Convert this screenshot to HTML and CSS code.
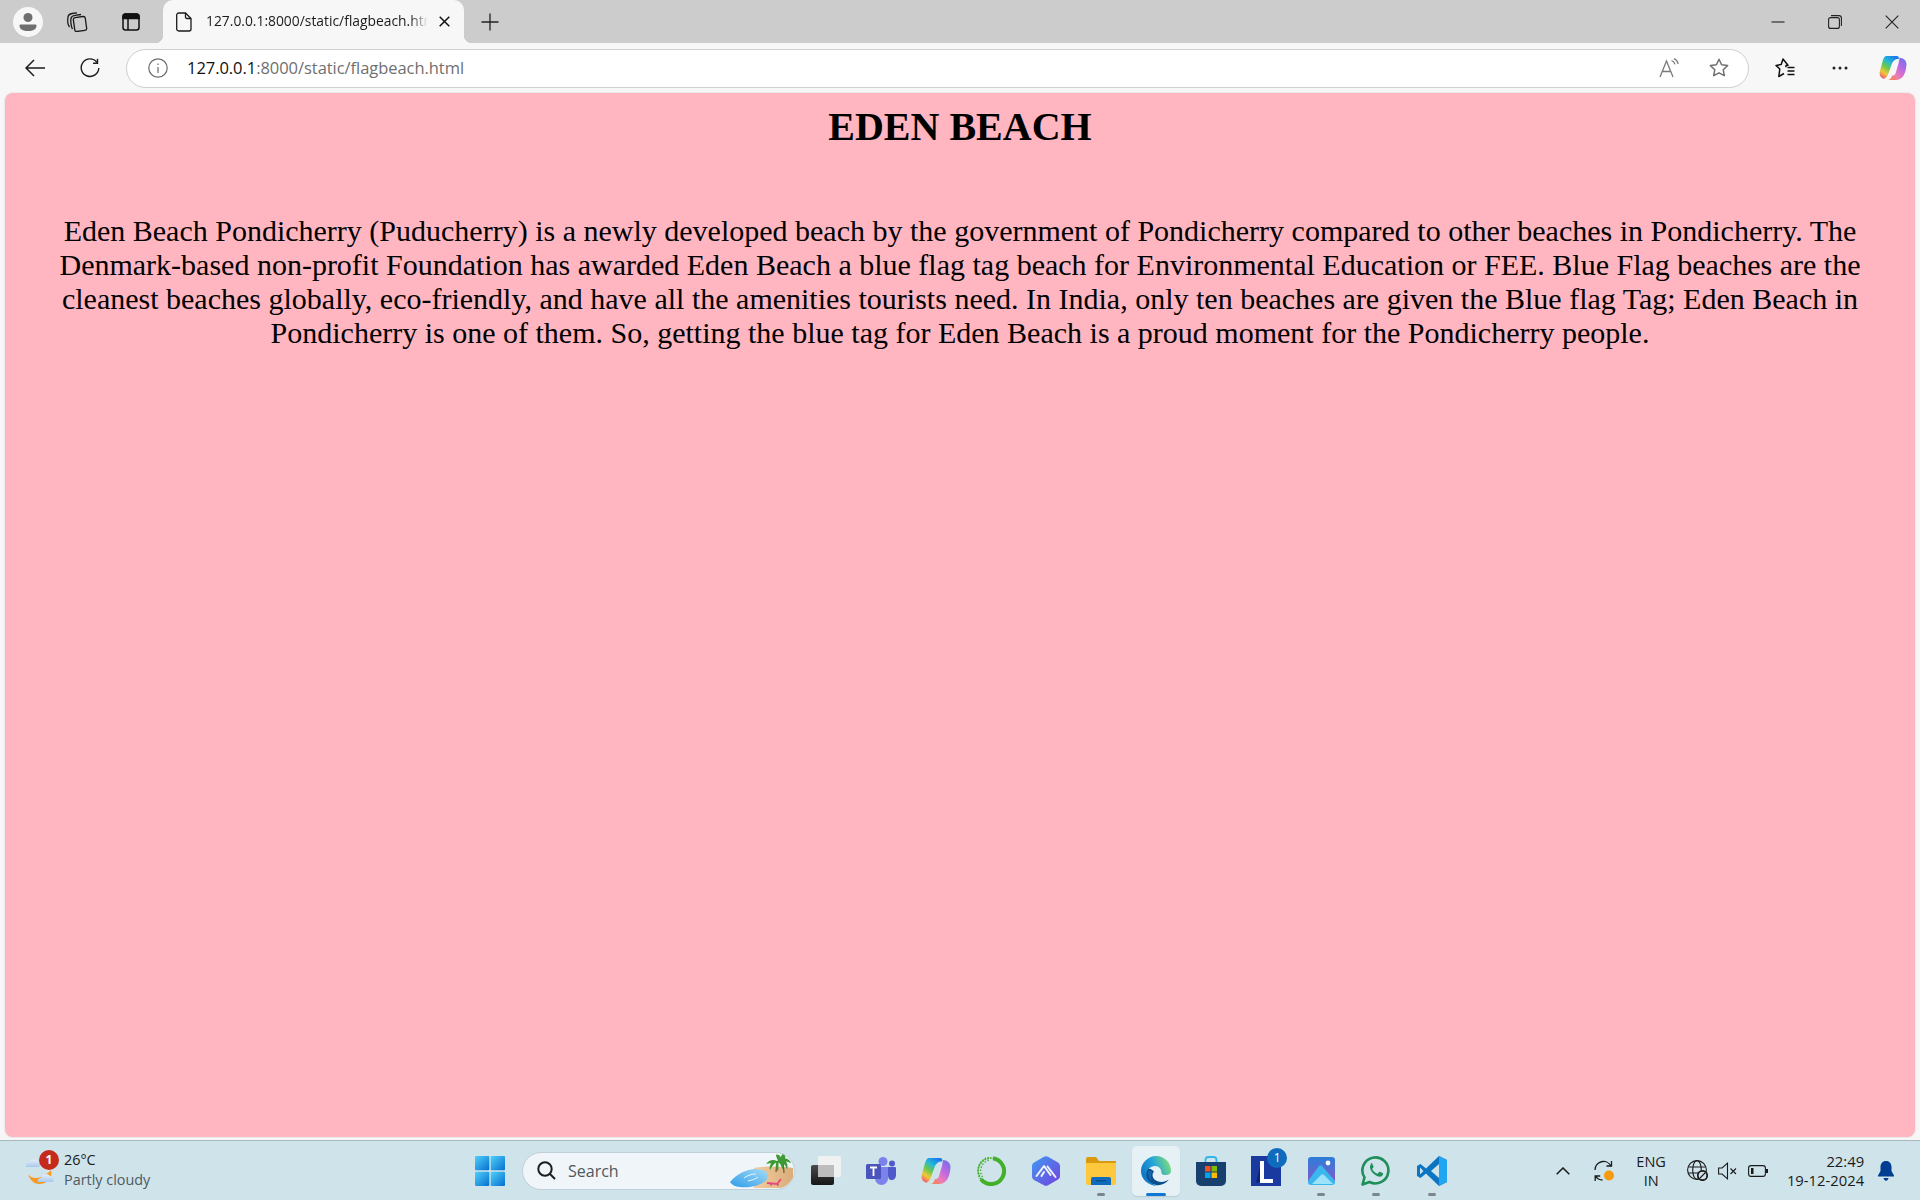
FILE: index.html
```html
<!DOCTYPE html>
<html lang="en">
<head>
<meta charset="utf-8">
<title>Eden Beach</title>
<link rel="stylesheet" href="styles.css">
</head>
<body>
<svg class="defs" width="0" height="0" aria-hidden="true">
  <defs>
    <linearGradient id="cp" x1=".75" y1="0" x2=".2" y2="1">
      <stop offset="0" stop-color="#1a78ee"/><stop offset=".3" stop-color="#22b8d8"/><stop offset=".55" stop-color="#6cc94a"/><stop offset=".78" stop-color="#f2c83a"/><stop offset="1" stop-color="#ee5f6a"/>
    </linearGradient>
    <linearGradient id="cp2" x1=".9" y1="0" x2=".1" y2="1">
      <stop offset="0" stop-color="#6f70ea"/><stop offset=".4" stop-color="#c168e0"/><stop offset=".7" stop-color="#ee7db8"/><stop offset="1" stop-color="#f5853a"/>
    </linearGradient>
    <symbol id="copilot" viewBox="0 0 30 28">
      <path d="M8 1h11c2 0 3 2 2 3.500-3-.5-5.500 1.500-7 4.500l-4 11c-1 3-3 6-5.500 5.500C1 24 0 21 1 17L4 6c1-3 2-5 4-5z" fill="url(#cp)"/>
      <path d="M22 3c4 0 8 3 7.500 8-.5 4-1.500 10-4.500 13-2 2-4 3-7 3H9c3 0 4-2 5-5 1.500 0 3 0 4-3l3-10c.5-2 .5-4 1-6z" fill="url(#cp2)"/>
    </symbol>
    <linearGradient id="win" x1="0" y1="0" x2="1" y2="1">
      <stop offset="0" stop-color="#4fd0fb"/><stop offset="1" stop-color="#0570cf"/>
    </linearGradient>
    <linearGradient id="edge" x1="0" y1=".7" x2="1" y2=".3">
      <stop offset="0" stop-color="#0d6fc4"/><stop offset=".5" stop-color="#22a5dc"/><stop offset="1" stop-color="#7edc78"/>
    </linearGradient>
    <linearGradient id="hex" x1="0" y1="0" x2="1" y2="1">
      <stop offset="0" stop-color="#3f9bf0"/><stop offset="1" stop-color="#7440e0"/>
    </linearGradient>
    <linearGradient id="photo" x1="0" y1="0" x2="0" y2="1">
      <stop offset="0" stop-color="#2a7fd8"/><stop offset="1" stop-color="#8a56c8"/>
    </linearGradient>
    <linearGradient id="pool" x1="0" y1="1" x2="1" y2="0">
      <stop offset="0" stop-color="#2f9ce8"/><stop offset="1" stop-color="#a6dcf6"/>
    </linearGradient>
    <linearGradient id="sand" x1="0" y1="0" x2="1" y2="0">
      <stop offset="0" stop-color="#f3cc9e"/><stop offset="1" stop-color="#d9ad7a"/>
    </linearGradient>
    <linearGradient id="tv" x1="0" y1="0" x2="0" y2="1">
      <stop offset="0" stop-color="#4a4a4a"/><stop offset="1" stop-color="#161616"/>
    </linearGradient>
    <linearGradient id="cloud" x1="0" y1="0" x2="0" y2="1">
      <stop offset="0" stop-color="#e4effb"/><stop offset="1" stop-color="#a9c8ee"/>
    </linearGradient>
  </defs>
</svg>

<div class="tabstrip">
  <div class="cell cell-profile">
    <span class="avatar">
      <svg width="30" height="30" viewBox="0 0 30 30"><circle cx="15" cy="15" r="15" fill="#f7f7f7"/><circle cx="15" cy="10.500" r="4.500" fill="#6e6e6e"/><path d="M7.500 17.500h15a1 1 0 0 1 1 1v.5c0 3-3.500 5-8.500 5s-8.500-2-8.500-5v-.5a1 1 0 0 1 1-1z" fill="#6e6e6e"/></svg>
    </span>
  </div>
  <div class="cell cell-coll">
    <svg width="22" height="20" viewBox="0 0 22 20" fill="none" stroke="#1a1a1a" stroke-width="1.300"><rect x="8" y="5" width="12" height="14" rx="2" transform="rotate(-8 14 12)"/><path d="M6.500 17C5 15 4.500 9 5 6.500 5.300 4.500 7 3.500 9 3.300l6-.8"/><path d="M3.500 15C2 13 1.500 8 2 5 2.300 3 4 1.800 6 1.500l5-.7"/></svg>
  </div>
  <div class="cell cell-tabs">
    <svg width="18" height="18" viewBox="0 0 18 18" fill="none" stroke="#111" stroke-width="1.500"><rect x="1" y="1" width="16" height="16" rx="2.500"/><path d="M1 3.500a2.500 2.500 0 0 1 2.500-2.500h11a2.500 2.500 0 0 1 2.500 2.500V5.500H1z" fill="#111"/><path d="M6 5.500V17"/></svg>
  </div>
  <div class="tab">
    <svg class="tab-fav" width="16" height="20" viewBox="0 0 16 20" fill="none" stroke="#1a1a1a" stroke-width="1.300"><path d="M2.700 1h6.800L15 6.500V17a2 2 0 0 1-2 2H2.700a2 2 0 0 1-2-2V3a2 2 0 0 1 2-2z"/><path d="M9.500 1v4a1.500 1.500 0 0 0 1.500 1.500h4"/></svg>
    <span class="tab-title">127.0.0.1:8000/static/flagbeach.html</span>
    <svg class="tab-close" width="11" height="11" viewBox="0 0 11 11" stroke="#111" stroke-width="1.500"><path d="M.7.7l9.600 9.600M10.300.7L.7 10.300"/></svg>
  </div>
  <div class="cell cell-plus">
    <svg width="18" height="18" viewBox="0 0 18 18" stroke="#222" stroke-width="1.300"><path d="M9 .5v17M.5 9h17"/></svg>
  </div>
  <div class="spacer"></div>
  <div class="cell cell-win">
    <svg width="14" height="14" viewBox="0 0 14 14" stroke="#222" stroke-width="1.100"><path d="M.5 7h13"/></svg>
  </div>
  <div class="cell cell-win">
    <svg width="14" height="14" viewBox="0 0 14 14" fill="none" stroke="#222" stroke-width="1.100"><rect x=".6" y="2.600" width="10.800" height="10.800" rx="2"/><path d="M3 .6h8a2.400 2.400 0 0 1 2.400 2.400v8"/></svg>
  </div>
  <div class="cell cell-win">
    <svg width="14" height="14" viewBox="0 0 14 14" stroke="#222" stroke-width="1.100"><path d="M.7.7l12.600 12.600M13.300.7L.7 13.300"/></svg>
  </div>
</div>

<div class="toolbar">
  <div class="cell cell-back">
    <svg width="20" height="18" viewBox="0 0 20 18" fill="none" stroke="#1c1c1c" stroke-width="1.500"><path d="M20 9H1M9 1L1 9l8 8"/></svg>
  </div>
  <div class="cell cell-reload">
    <svg width="20" height="20" viewBox="0 0 20 20" fill="none" stroke="#1c1c1c" stroke-width="1.400"><path d="M16.900 4.200A8.800 8.800 0 1 0 18.800 10"/><path d="M17.500.8v4.400h-4.400"/></svg>
  </div>
  <div class="address">
    <svg class="addr-info" width="20" height="20" viewBox="0 0 20 20" fill="none" stroke="#6c6c6c" stroke-width="1.200"><circle cx="10" cy="10" r="9.200"/><path d="M10 9v6M10 5.500v1.500"/></svg>
    <span class="url"><span class="url-host">127.0.0.1</span>:8000/static/flagbeach.html</span>
    <svg class="addr-read" width="20" height="20" viewBox="0 0 20 20" fill="none" stroke="#7a7a7a" stroke-width="1.300"><path d="M1 19L7.500 3 14 19M3.500 13.500h8"/><path d="M12.500 2.500c1.800.6 3 2 3.500 3.800M15 .6c2.200.9 3.700 2.900 4.200 5.200"/></svg>
    <svg class="addr-star" width="20" height="20" viewBox="0 0 20 20" fill="none" stroke="#707070" stroke-width="1.500"><path d="M10 1.300l2.600 5.500 6 .8-4.400 4.100 1.100 6L10 14.800l-5.300 2.900 1.100-6L1.400 7.600l6-.8z" stroke-linejoin="round"/></svg>
  </div>
  <div class="cell cell-fav">
    <svg width="20" height="20" viewBox="0 0 20 20" fill="none" stroke="#111" stroke-width="1.500"><path d="M11 9.200V7.500l2-.3L8 1 6.200 6.500 1 7.400 4.800 11 3.800 18.500 9 15.500" stroke-linejoin="round"/><path d="M12.500 9.500h7M12.500 13h7M12.500 16.500h7"/></svg>
  </div>
  <div class="cell cell-dots">
    <svg width="16" height="4" viewBox="0 0 16 4" fill="#222"><circle cx="2" cy="2" r="1.500"/><circle cx="8" cy="2" r="1.500"/><circle cx="14" cy="2" r="1.500"/></svg>
  </div>
  <div class="cell cell-copilot">
    <svg width="28" height="26"><use href="#copilot"/></svg>
  </div>
</div>

<main class="page">
  <h1 class="title">EDEN BEACH</h1>
  <p class="intro">Eden Beach Pondicherry (Puducherry) is a newly developed beach by the government of Pondicherry compared to other beaches in Pondicherry. The Denmark-based non-profit Foundation has awarded Eden Beach a blue flag tag beach for Environmental Education or FEE. Blue Flag beaches are the cleanest beaches globally, eco-friendly, and have all the amenities tourists need. In India, only ten beaches are given the Blue flag Tag; Eden Beach in Pondicherry is one of them. So, getting the blue tag for Eden Beach is a proud moment for the Pondicherry people.</p>
</main>

<footer class="taskbar">
  <div class="weather">
    <span class="weather-icon">
      <svg width="30" height="30" viewBox="0 0 30 30"><path d="M3 19c3 5 11 5 17 1 3-2 5-4 6-5 2 7-3 14-12 14-5 0-9-4-11-10z" fill="#f59a23"/><path d="M1 12c-1-2 1-4 3-4 1-4 7-5 9-1 2 0 3 3 1 5z" fill="url(#cloud)"/><path d="M13 27c-1-2 1-4 3-4 1-4 7-5 9-2 3 0 5 4 3 6z" fill="url(#cloud)"/></svg>
      <span class="weather-badge">1</span>
    </span>
    <span class="weather-text">
      <span class="temp">26°C</span>
      <span class="cond">Partly cloudy</span>
    </span>
  </div>
  <div class="tb-item tb-start">
    <svg width="30" height="30" viewBox="0 0 30 30" fill="url(#win)"><rect x="0" y="0" width="14.300" height="14.300" rx="1"/><rect x="15.700" y="0" width="14.300" height="14.300" rx="1"/><rect x="0" y="15.700" width="14.300" height="14.300" rx="1"/><rect x="15.700" y="15.700" width="14.300" height="14.300" rx="1"/></svg>
  </div>
  <div class="searchbox">
    <svg class="search-icon" width="19" height="19" viewBox="0 0 19 19" fill="none" stroke="#1d1d1d" stroke-width="2"><circle cx="8" cy="8" r="6.700"/><path d="M13 13l5 5"/></svg>
    <span class="search-label">Search</span>
    <svg class="search-art" width="64" height="38" viewBox="0 0 64 38">
      <path d="M24 16c11-2 26-2 39 0v10c-3 5-7 9-13 10H24z" fill="url(#sand)"/>
      <path d="M0 30c6-8 18-14 28-13 8 1 12 5 9 10-4 6-17 9-27 8-5-.5-8-2-10-5z" fill="url(#pool)"/>
      <path d="M14 26c4-3 8-4 12-4M18 29c4-1 8-2 10-4" stroke="#e3f4fd" stroke-width="1" fill="none"/>
      <path d="M37 31l10 1 4-5" stroke="#e9487f" stroke-width="2" fill="none"/>
      <path d="M41 32v2M48 32v2" stroke="#c9356a" stroke-width="1"/>
      <path d="M46 20l1-11M54 21l-1-12" stroke="#7a5a30" stroke-width="1.300"/>
      <path d="M47 9c-4-2-8-1-11 3 2-.5 4-1 5-.5-1 2-2 4-1 7 1-3 3-6 6-8-.5 3 0 6 2 9 .5-3 .5-6 .5-9 2 1 3 4 4 7 1-2 1-4 .5-6 2 1 3 3 4 6 1-3 .5-6-1-8 2 0 4 1 5 2-.5-3-3-5-6-5 1-2 0-4-2-5-1 1-2 2-2 4-1-2-2-3-5-3 0 2 1 4 2 6z" fill="#3e9a34"/>
    </svg>
  </div>
  <div class="tb-item">
    <svg width="30" height="30" viewBox="0 0 30 30"><rect x="0" y="9" width="23" height="20" rx="2" fill="url(#tv)"/><rect x="7" y="0" width="23" height="21" rx="1.500" fill="#f3f3f3" fill-opacity=".9"/><rect x="7" y="9" width="16" height="12" fill="#bdbdbd"/></svg>
  </div>
  <div class="tb-item">
    <svg width="30" height="28" viewBox="0 0 30 28"><circle cx="17" cy="4.500" r="4.500" fill="#7b83eb"/><circle cx="26" cy="6.500" r="3" fill="#5059c9"/><path d="M22 10h7a1 1 0 0 1 1 1v7c0 3-2 5-4.500 5S22 21 22 18z" fill="#5059c9"/><path d="M9 10h13v11c0 4-3 7-6.500 7S9 25 9 21z" fill="#7b83eb"/><rect x="0" y="7" width="15" height="15" rx="1.500" fill="#4b53bc"/><path d="M4 10.500h7M7.500 10.500V19" stroke="#fff" stroke-width="1.800"/></svg>
  </div>
  <div class="tb-item">
    <svg width="30" height="28"><use href="#copilot"/></svg>
  </div>
  <div class="tb-item">
    <svg width="30" height="30" viewBox="0 0 30 30" fill="none"><path d="M17 2.200A13 13 0 1 1 5 23.300" stroke="#43b02a" stroke-width="4"/><path d="M5 23.300A13 13 0 0 1 17 2.200" stroke="#43b02a" stroke-width="1.800" stroke-dasharray="1.600 1.200"/><path d="M3.600 20A13 13 0 0 1 14 1.200" stroke="#43b02a" stroke-width="1.400" stroke-dasharray="1.400 1.400"/><path d="M6.500 21A11 11 0 0 1 14 4" stroke="#43b02a" stroke-width="1.400" stroke-dasharray="1.400 1.800"/></svg>
  </div>
  <div class="tb-item">
    <svg width="28" height="30" viewBox="0 0 28 30"><path d="M12 .8c1.200-.7 2.800-.7 4 0l10 5.700c1.200.7 2 2 2 3.400v10.200c0 1.400-.8 2.700-2 3.400l-10 5.700c-1.200.7-2.800.7-4 0L2 24c-1.200-.7-2-2-2-3.400V9.900c0-1.400.8-2.700 2-3.400z" fill="url(#hex)"/><path d="M4.500 20L12 10l6.500 9M15.500 10.500L23.500 21M12 16l-2.500 4" fill="none" stroke="#fff" stroke-width="2" stroke-linecap="round" stroke-linejoin="round" opacity=".92"/></svg>
  </div>
  <div class="tb-item tb-open">
    <svg width="30" height="28" viewBox="0 0 30 28"><path d="M0 2a2 2 0 0 1 2-2h8l3 4h17v4H0z" fill="#d99a10"/><path d="M0 6h30v20a2 2 0 0 1-2 2H2a2 2 0 0 1-2-2z" fill="#fdc73e"/><path d="M5 22a2 2 0 0 1 2-2h16a2 2 0 0 1 2 2v6H5z" fill="#0f6cbd"/><rect x="10" y="23" width="10" height="1.500" fill="#0a4f8f"/></svg>
  </div>
  <div class="tb-item tb-active">
    <svg width="30" height="30" viewBox="0 0 30 30"><path d="M15 0c9 0 15 7 15 15 0 2.500-2 4-5 4-3 0-4.500-.5-4.500-2 0-4-2.500-7-6.500-7-5 0-8 4-8 8 0 6 5 11 11 12C7 30 0 23 0 15 0 7 7 0 15 0z" fill="url(#edge)"/><path d="M7 13c-3 5-2 11 3 14 5 3.500 13 3 18-3.500-5 3.500-11 3-14.500 0-2.500-2.500-2.500-6 -.5-8-1.500-1.500-4-3.500-6-2.500z" fill="#0b4f8f"/><path d="M7.500 15c-1 4 .5 8 3.500 10-1.500-3-1.500-7 .5-9.500z" fill="#1668b0"/></svg>
  </div>
  <div class="tb-item">
    <svg width="30" height="30" viewBox="0 0 30 30"><path d="M9.500 6V4a3 3 0 0 1 3-3h5a3 3 0 0 1 3 3v2" fill="none" stroke="#30b6ec" stroke-width="1.800"/><path d="M0 6h30v19a5 5 0 0 1-5 5H5a5 5 0 0 1-5-5z" fill="#17406f"/><rect x="9" y="10" width="5.500" height="5.500" fill="#f25022"/><rect x="15.500" y="10" width="5.500" height="5.500" fill="#7fba00"/><rect x="9" y="16.500" width="5.500" height="5.500" fill="#00a4ef"/><rect x="15.500" y="16.500" width="5.500" height="5.500" fill="#ffb900"/></svg>
  </div>
  <div class="tb-item">
    <span class="l-wrap">
      <svg width="30" height="30" viewBox="0 0 30 30"><rect width="30" height="30" fill="#1a3aa0"/><path d="M5 27l7-2V6h-2z" fill="#0d2470"/><path d="M9 5h4v18h9v4H9z" fill="#fff"/></svg>
      <span class="l-badge">1</span>
    </span>
  </div>
  <div class="tb-item tb-open">
    <svg width="27" height="28" viewBox="0 0 27 28"><rect width="27" height="27" rx="3" fill="url(#photo)"/><circle cx="20" cy="6" r="2.400" fill="#f3f8fd"/><path d="M0 24L11 9c1-1 2-1 3 0l13 15v1a3 3 0 0 1-3 3H3a3 3 0 0 1-3-3z" fill="#39b7ee"/><path d="M4 27l9-9c1-1 2-1 3 0l9 9z" fill="#9ce3fa"/></svg>
  </div>
  <div class="tb-item tb-open">
    <svg width="30" height="30" viewBox="0 0 30 30"><path d="M1.500 28.500l2-7A13 13 0 1 1 8.500 26z" fill="none" stroke="#1f8f5a" stroke-width="2.600" stroke-linejoin="round"/><path d="M10.500 8c-1.500.7-2 3-1 5.500 1.400 3.300 3.700 5.400 7 6.800 2.500.9 4.700.3 5.400-1.500.3-.8.300-1.300.1-1.500l-3-1.500c-.5-.2-.8 0-1.100.4l-1 1.200c-.3.300-.5.300-1 .1-2-.8-3.500-2.200-4.500-4.200-.2-.4-.2-.6.1-.9l.9-1.100c.2-.3.200-.6.100-.9l-1.300-3c-.3-.6-.8-.6-1.700-.4z" fill="#1f8f5a"/></svg>
  </div>
  <div class="tb-item tb-open">
    <svg width="30" height="30" viewBox="0 0 30 30"><path d="M22 0l8 4v22l-8 4-13-12.500L3.500 22 0 20v-10l3.500-2L9 12.500z" fill="#0a75c2"/><path d="M22 0l8 4v22l-8 4z" fill="#23a6f2"/><path d="M22 8l-8 7 8 7z" fill="#cfe3ea"/><path d="M3 11.500v7l3.500-3.500z" fill="#cfe3ea"/></svg>
  </div>
  <div class="tray">
    <span class="tray-chevron">
      <svg width="14" height="8" viewBox="0 0 14 8" fill="none" stroke="#1a1a1a" stroke-width="1.500"><path d="M.7 7.300L7 1l6.300 6.300"/></svg>
    </span>
    <span class="tray-sync">
      <svg width="21" height="22" viewBox="0 0 21 22" fill="none" stroke="#1a1a1a" stroke-width="1.300"><path d="M1 10a8.500 8.500 0 0 1 16-4M17.500 1v5h-5"/><path d="M1.200 21v-5h5M1.500 16c1.500 2.500 3.500 4 7 4"/><circle cx="15" cy="15.500" r="5" fill="#f59a0e" stroke="none"/></svg>
    </span>
    <span class="tray-lang"><span>ENG</span><span>IN</span></span>
    <span class="tray-net">
      <svg width="21" height="21" viewBox="0 0 21 21" fill="none" stroke="#1a1a1a" stroke-width="1.100"><circle cx="10" cy="10" r="9.400"/><ellipse cx="10" cy="10" rx="4.300" ry="9.400"/><path d="M1 7h18M1 13h18"/><circle cx="15.500" cy="15.500" r="5" fill="#cfe3ea"/><circle cx="15.500" cy="15.500" r="4.400"/><path d="M12.500 18.500l6-6"/></svg>
    </span>
    <span class="tray-sound">
      <svg width="19" height="18" viewBox="0 0 19 18" fill="none" stroke="#1a1a1a" stroke-width="1.100"><path d="M.6 6h3.500l5.400-4.800v15.600L4.100 12H.6z"/><path d="M12.500 6.500l5.500 5.500M18 6.500L12.500 12"/></svg>
    </span>
    <span class="tray-batt">
      <svg width="20" height="12" viewBox="0 0 20 12" fill="none" stroke="#1a1a1a" stroke-width="1.100"><rect x=".6" y=".6" width="16.800" height="10.800" rx="2.500"/><rect x="3" y="3" width="2.500" height="6" fill="#1a1a1a" stroke="none"/><rect x="18" y="4" width="2" height="4" fill="#1a1a1a" stroke="none"/></svg>
    </span>
    <span class="tray-clock"><span>22:49</span><span>19-12-2024</span></span>
    <span class="tray-bell">
      <svg width="16" height="20" viewBox="0 0 16 20" fill="#003e92"><path d="M8 0c3.500 0 5.500 2.700 5.500 6v4l2.500 4.500v1H0v-1L2.500 10V6C2.500 2.700 4.500 0 8 0z"/><path d="M5.500 17h5c-.3 1.700-1.300 2.700-2.500 2.700S5.800 18.700 5.500 17z"/></svg>
    </span>
  </div>
</footer>
</body>
</html>
```
FILE: styles.css
```css
* { box-sizing: border-box; }
html, body { height: 100%; }
body {
  margin: 0;
  height: 1200px;
  display: flex;
  flex-direction: column;
  background: #f7f7f7;
  font-family: "Open Sans", "Noto Sans", sans-serif;
  overflow: hidden;
}
.defs { position: absolute; }
.cell { display: flex; align-items: center; justify-content: center; height: 100%; flex: none; }
.spacer { flex: 1; }

/* tab strip */
.tabstrip { display: flex; height: 43px; flex: none; background: #cccccc; }
.cell-profile { width: 56px; }
.avatar { display: flex; }
.cell-coll { width: 42px; }
.cell-tabs { width: 65px; }
.cell-plus { width: 52px; }
.cell-win { width: 57px; }
.tab {
  position: relative;
  width: 301px;
  display: flex;
  align-items: center;
  background: #f7f7f7;
  border-radius: 10px 10px 0 0;
  padding-left: 13px;
}
.tab::before, .tab::after {
  content: "";
  position: absolute;
  bottom: 0;
  width: 8px;
  height: 8px;
}
.tab::before { left: -8px; background: radial-gradient(circle at 0 0, #cccccc 8px, #f7f7f7 8.500px); }
.tab::after { right: -8px; background: radial-gradient(circle at 100% 0, #cccccc 8px, #f7f7f7 8.500px); }
.tab-fav { flex: none; }
.tab-title {
  margin-left: 14px;
  padding-bottom: 2px;
  width: 222px;
  font-size: 13.850px;
  color: #1c1c1c;
  white-space: nowrap;
  overflow: hidden;
  -webkit-mask-image: linear-gradient(to right, #000 92%, transparent);
  mask-image: linear-gradient(to right, #000 92%, transparent);
}
.tab-close { margin-left: 11px; flex: none; }

/* toolbar */
.toolbar { display: flex; height: 50px; flex: none; padding: 5px 4px 5px 0; align-items: center; background: #f7f7f7; }
.cell-back { width: 70px; }
.cell-reload { width: 40px; }
.address {
  flex: 1;
  margin-left: 16px;
  height: 39px;
  display: flex;
  align-items: center;
  background: #fff;
  border: 1px solid #cfcfcf;
  border-radius: 20px;
  padding: 0 19px 0 21px;
}
.addr-info { flex: none; }
.url { margin-left: 19px; padding-bottom: 2px; flex: 1; font-size: 16.500px; color: #6f6f6f; letter-spacing: -.05px; white-space: nowrap; }
.url-host { color: #111; }
.addr-star { margin-left: 30px; flex: none; }
.addr-read { flex: none; }
.cell-fav { width: 50px; margin-left: 11px; }
.cell-dots { width: 60px; }
.cell-copilot { width: 46px; }

/* page */
.page {
  flex: none;
  height: 1044px;
  margin: 0 5px;
  padding: 11px 10px 10px;
  background: #ffb6c1;
  border-radius: 8px;
  box-shadow: 0 0 2px rgba(0, 0, 0, .18);
  color: #000;
  font-family: "Liberation Serif", "Times New Roman", serif;
  text-align: center;
}
.title { margin: 0; font-size: 40px; font-weight: 700; line-height: 46px; }
.intro { margin: 64px 0 0; font-size: 30px; line-height: 34px; }

/* taskbar */
.taskbar {
  flex: none;
  margin-top: 3px;
  height: 60px;
  display: flex;
  align-items: center;
  background: #cfe3ea;
  border-top: 1px solid #a9b7bd;
}
.weather { width: 462px; flex: none; display: flex; align-items: center; padding-left: 25px; padding-bottom: 2px; }
.weather-icon { position: relative; display: flex; width: 39px; flex: none; }
.weather-badge {
  position: absolute;
  left: 14px;
  top: -5px;
  width: 20px;
  height: 20px;
  border-radius: 50%;
  background: #c42b1c;
  color: #fff;
  font-size: 12px;
  font-weight: 700;
  line-height: 20px;
  text-align: center;
}
.weather-text { display: flex; flex-direction: column; font-size: 14.400px; line-height: 20px; }
.temp { color: #1b1b1b; }
.cond { color: #505a60; }
.tb-item {
  position: relative;
  width: 55.100px;
  height: 50px;
  flex: none;
  display: flex;
  align-items: center;
  justify-content: center;
}
.tb-start { width: 55px; }
.tb-open::after, .tb-active::after {
  content: "";
  position: absolute;
  bottom: 0;
  left: 50%;
  width: 8px;
  height: 3px;
  margin-left: -4px;
  border-radius: 2px;
  background: #7b868b;
}
.tb-active { background: #e6f1f6; border-radius: 5px; box-shadow: 0 1px 1px rgba(0, 0, 0, .1); width: 48px; margin: 0 3.550px; }
.tb-active::after { width: 20px; margin-left: -10px; background: #0f78d4; }
.searchbox {
  width: 273px;
  height: 38px;
  margin: 0 3px 0 5px;
  flex: none;
  display: flex;
  align-items: center;
  padding-left: 14px;
  background: #eff5f9;
  border-radius: 19px;
  border: 1px solid #bfd0d8;
  overflow: hidden;
}
.search-icon { flex: none; }
.search-label { margin-left: 12px; flex: 1; font-size: 16px; color: #50585c; }
.search-art { flex: none; }
.l-wrap { position: relative; display: flex; }
.l-badge {
  position: absolute;
  right: -6px;
  top: -8px;
  width: 20px;
  height: 20px;
  border-radius: 50%;
  background: #0f6cbd;
  color: #fff;
  font-size: 12px;
  line-height: 20px;
  text-align: center;
}
.tray { margin-left: 97px; flex: none; display: flex; align-items: center; }
.tray-chevron { display: flex; width: 14px; }
.tray-sync { display: flex; width: 21px; margin-left: 23.500px; }
.tray-lang, .tray-clock { display: flex; flex-direction: column; font-size: 14.500px; line-height: 19px; color: #1b1b1b; }
.tray-lang { width: 40px; margin-left: 16.500px; align-items: center; }
.tray-net { display: flex; margin-left: 16px; }
.tray-sound { display: flex; margin-left: 10px; }
.tray-batt { display: flex; margin-left: 11px; }
.tray-clock { width: 78px; margin-left: 18px; align-items: flex-end; font-size: 14.800px; }
.tray-bell { display: flex; margin-left: 13.500px; }
```
